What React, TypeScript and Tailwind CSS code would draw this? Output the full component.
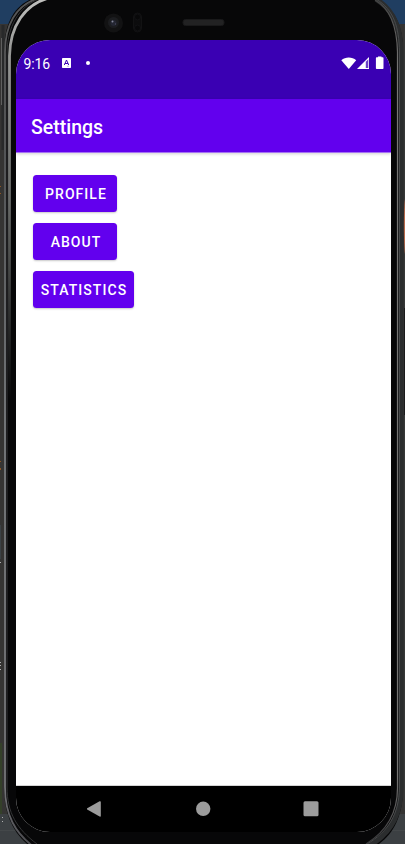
import React from 'react';

function PhoneFrame() {
  return (
    <svg className="absolute inset-0 -z-10" width="405" height="844" viewBox="0 0 405 844" fill="none" aria-hidden="true">
      <defs>
        <linearGradient id="inner" x1="0" y1="0" x2="0" y2="400" gradientUnits="userSpaceOnUse">
          <stop offset="0" stopColor="#c0c0be" />
          <stop offset=".12" stopColor="#989997" />
          <stop offset=".5" stopColor="#686a68" />
          <stop offset=".85" stopColor="#222323" />
          <stop offset="1" stopColor="#070708" />
        </linearGradient>
        <linearGradient id="outer" x1="0" y1="0" x2="0" y2="844" gradientUnits="userSpaceOnUse">
          <stop offset="0" stopColor="#555" />
          <stop offset=".2" stopColor="#5c5e60" />
          <stop offset=".5" stopColor="#7c7f82" />
          <stop offset=".93" stopColor="#77777a" />
          <stop offset="1" stopColor="#4b4b50" />
        </linearGradient>
        <linearGradient id="right" x1="0" y1="0" x2="0" y2="844" gradientUnits="userSpaceOnUse">
          <stop offset="0" stopColor="#444" />
          <stop offset=".08" stopColor="#777675" />
          <stop offset=".92" stopColor="#777675" />
          <stop offset="1" stopColor="#38383a" />
        </linearGradient>
      </defs>
      <path fill="#353433" d="M0 0h405v844H0z" />
      <path fill="#203e61" d="M0 0h405v24H0z" />
      <path fill="#3c4043" d="M0 814h405v30H0z" />
      <path fill="#44484a" d="M0 830h405v1H0z" />
      <path fill="#344029" d="M0 743h2v71H0z" />
      <path fill="#3b4145" d="M0 525h1v34H0z" />
      <path fill="#8c5624" d="M0 186h1v1H0zM0 193h1v1H0zM0 461h1v1H0zM0 468h1v2H0z" />
      <path fill="#b0b0b0" d="M0 562h1v1H0zM0 662h1v1H0zM0 665h1v1H0zM0 669h1v1H0zM2 817h1v1H2zM2 821h1v1H2z" />
      <path fill="#070708" d="M34-2C14 5 4 24 4 52V787C4 816 14 836 35 850H369C391 839 402 821 403 790V48C402 24 395 10 376-2Z" />
      <path stroke="#28292a" strokeWidth="3" d="M3 25V150" />
      <path stroke="#747474" strokeWidth=".7" d="M1.5 38V105" />
      <path stroke="url(#outer)" strokeWidth="1.8" d="M36-1C16 6 5 25 5 52V787C5 815 15 833 34 847" />
      <path stroke="#343536" strokeWidth="1" d="M39-1C19 6 7 27 7 54V787C7 813 17 829 37 844" />
      <path stroke="url(#inner)" strokeWidth="2.8" d="M49-2C25 4 10 26 9.500 56V400" />
      <path stroke="#2b2d2e" strokeWidth="5" d="M376-1C394 10 401 28 401 52V788C401 815 390 835 367 847" />
      <path stroke="#484a4b" strokeWidth="1" d="M376-1C394 10 399 27 399.500 52V788C399 814 388 832 367 844" />
      <path stroke="url(#right)" strokeWidth="1.2" d="M375 0C391 9 397 27 397.500 52V788C397.500 812 387 831 366 844" />
      <path fill="#373838" d="M404 25h1v785h-1z" />
      <path fill="#1b1b1c" d="M404 308h1v107h-1z" />
      <path fill="#b66849" d="M405 199C403.500 207 403.500 247 405 254z" />
      <circle cx="113.500" cy="23" r="9.500" fill="#121213" />
      <circle cx="113.500" cy="22.500" r="5.500" fill="#1c1d20" />
      <circle cx="113.500" cy="23" r="3" fill="#242632" />
      <circle cx="112.500" cy="21.500" r="1" fill="#85889a" />
      <circle cx="115.500" cy="24" r=".7" fill="#4a4c60" />
      <rect x="133.500" y="13" width="8" height="19" rx="4" fill="#0c0c0d" stroke="#121213" />
      <circle cx="137.500" cy="17" r="3" fill="#080809" stroke="#121214" />
      <circle cx="137.500" cy="28" r="3" fill="#080809" stroke="#121214" />
      <rect x="183" y="19.500" width="41" height="6" rx="2.500" fill="#222223" stroke="#19191a" />
    </svg>
  );
}

function StatusBar() {
  return (
    <div className="flex h-[59px] shrink-0 items-start bg-[#3a00b3] pt-4 text-white">
      <span className="ml-[7.5px] w-[27.5px] text-[14px] leading-4 tracking-[-0.150px]">9:16</span>
      <svg className="ml-[11px] mt-[2px]" width="9" height="10" viewBox="0 0 9 10" aria-hidden="true">
        <rect width="9" height="10" rx=".7" fill="#fff" />
        <path d="M2.300 7 4.500 2 6.700 7M3 5.500h3" fill="none" stroke="#3a00b3" />
        <path d="M5 8.200h2" stroke="#a68be0" strokeWidth=".7" />
      </svg>
      <span className="ml-[14.5px] mt-[5px] size-[4px] rounded-full bg-white" />
      <svg className="ml-auto" width="44" height="14" viewBox="0 0 44 14" fill="#fff" aria-hidden="true">
        <path d="M.3 4.200C4.300.5 11.200.5 15.200 4.200L7.800 13Z" />
        <path d="M16 13 28 1V13Z" />
        <path fill="#3a00b3" d="M24.800 5.800 27.300 3.300V12H24.800Z" opacity=".75" />
        <path d="M37 1.300V.5h3.500v.8h1.200q.8 0 .8.800V12.200q0 .8-.8.800h-6q-.8 0-.8-.8V2.100q0-.8.800-.8Z" />
      </svg>
      <span className="w-[6px]" />
    </div>
  );
}

function MaterialButton({ label, className }: { label: string; className: string }) {
  return (
    <button
      type="button"
      className={`h-[37px] rounded-[3.5px] bg-[#6200ee] text-center text-[14px] font-medium leading-[38px] tracking-[1.050px] text-white shadow-[0_1px_2px_rgba(0,0,0,0.22)] ${className}`}
    >
      {label}
    </button>
  );
}

function NavigationBar() {
  return (
    <nav className="flex h-[46px] shrink-0 items-start bg-black pt-[15px]">
      <svg className="ml-[71px]" width="14" height="16" viewBox="0 0 14 16" fill="#9c9c9c" aria-label="Back">
        <path d="M.2 7.200 12.600.3Q13.800-.2 13.800 1V15q0 1.100-1.200.6L.2 8.500Q-.3 7.900.2 7.200Z" />
      </svg>
      <svg className="ml-[95px]" width="15" height="16" viewBox="0 0 15 16" aria-label="Home">
        <circle cx="7.200" cy="7.800" r="7.200" fill="#9c9c9c" />
      </svg>
      <svg className="ml-[92px]" width="16" height="16" viewBox="0 0 16 16" aria-label="Overview">
        <rect x=".5" y=".3" width="15" height="15" rx="1.500" fill="#9c9c9c" />
      </svg>
    </nav>
  );
}

export default function App() {
  return (
    <div className="relative isolate flex h-[844px] w-[405px] flex-col overflow-hidden pl-4 pt-10 font-['Roboto',sans-serif]">
      <PhoneFrame />
      <div className="flex h-[792px] w-[375px] flex-col overflow-hidden rounded-[34px] bg-white">
        <StatusBar />
        <header className="h-[54px] shrink-0 border-b border-[#a572f3] bg-[#6200ee] pl-[15px] shadow-[0_1px_3px_rgba(0,0,0,0.18)]">
          <h1 className="text-[19.500px] font-medium leading-[57px] text-white">Settings</h1>
        </header>
        <main className="flex flex-1 flex-col items-start gap-[11px] border-b border-[#d4d4d4] pl-[17px] pt-[22px]">
          <MaterialButton label="PROFILE" className="w-[84px] pl-[2px]" />
          <MaterialButton label="ABOUT" className="w-[84px] pl-[2px]" />
          <MaterialButton label="STATISTICS" className="w-[101px] pl-px" />
        </main>
        <NavigationBar />
      </div>
    </div>
  );
}
